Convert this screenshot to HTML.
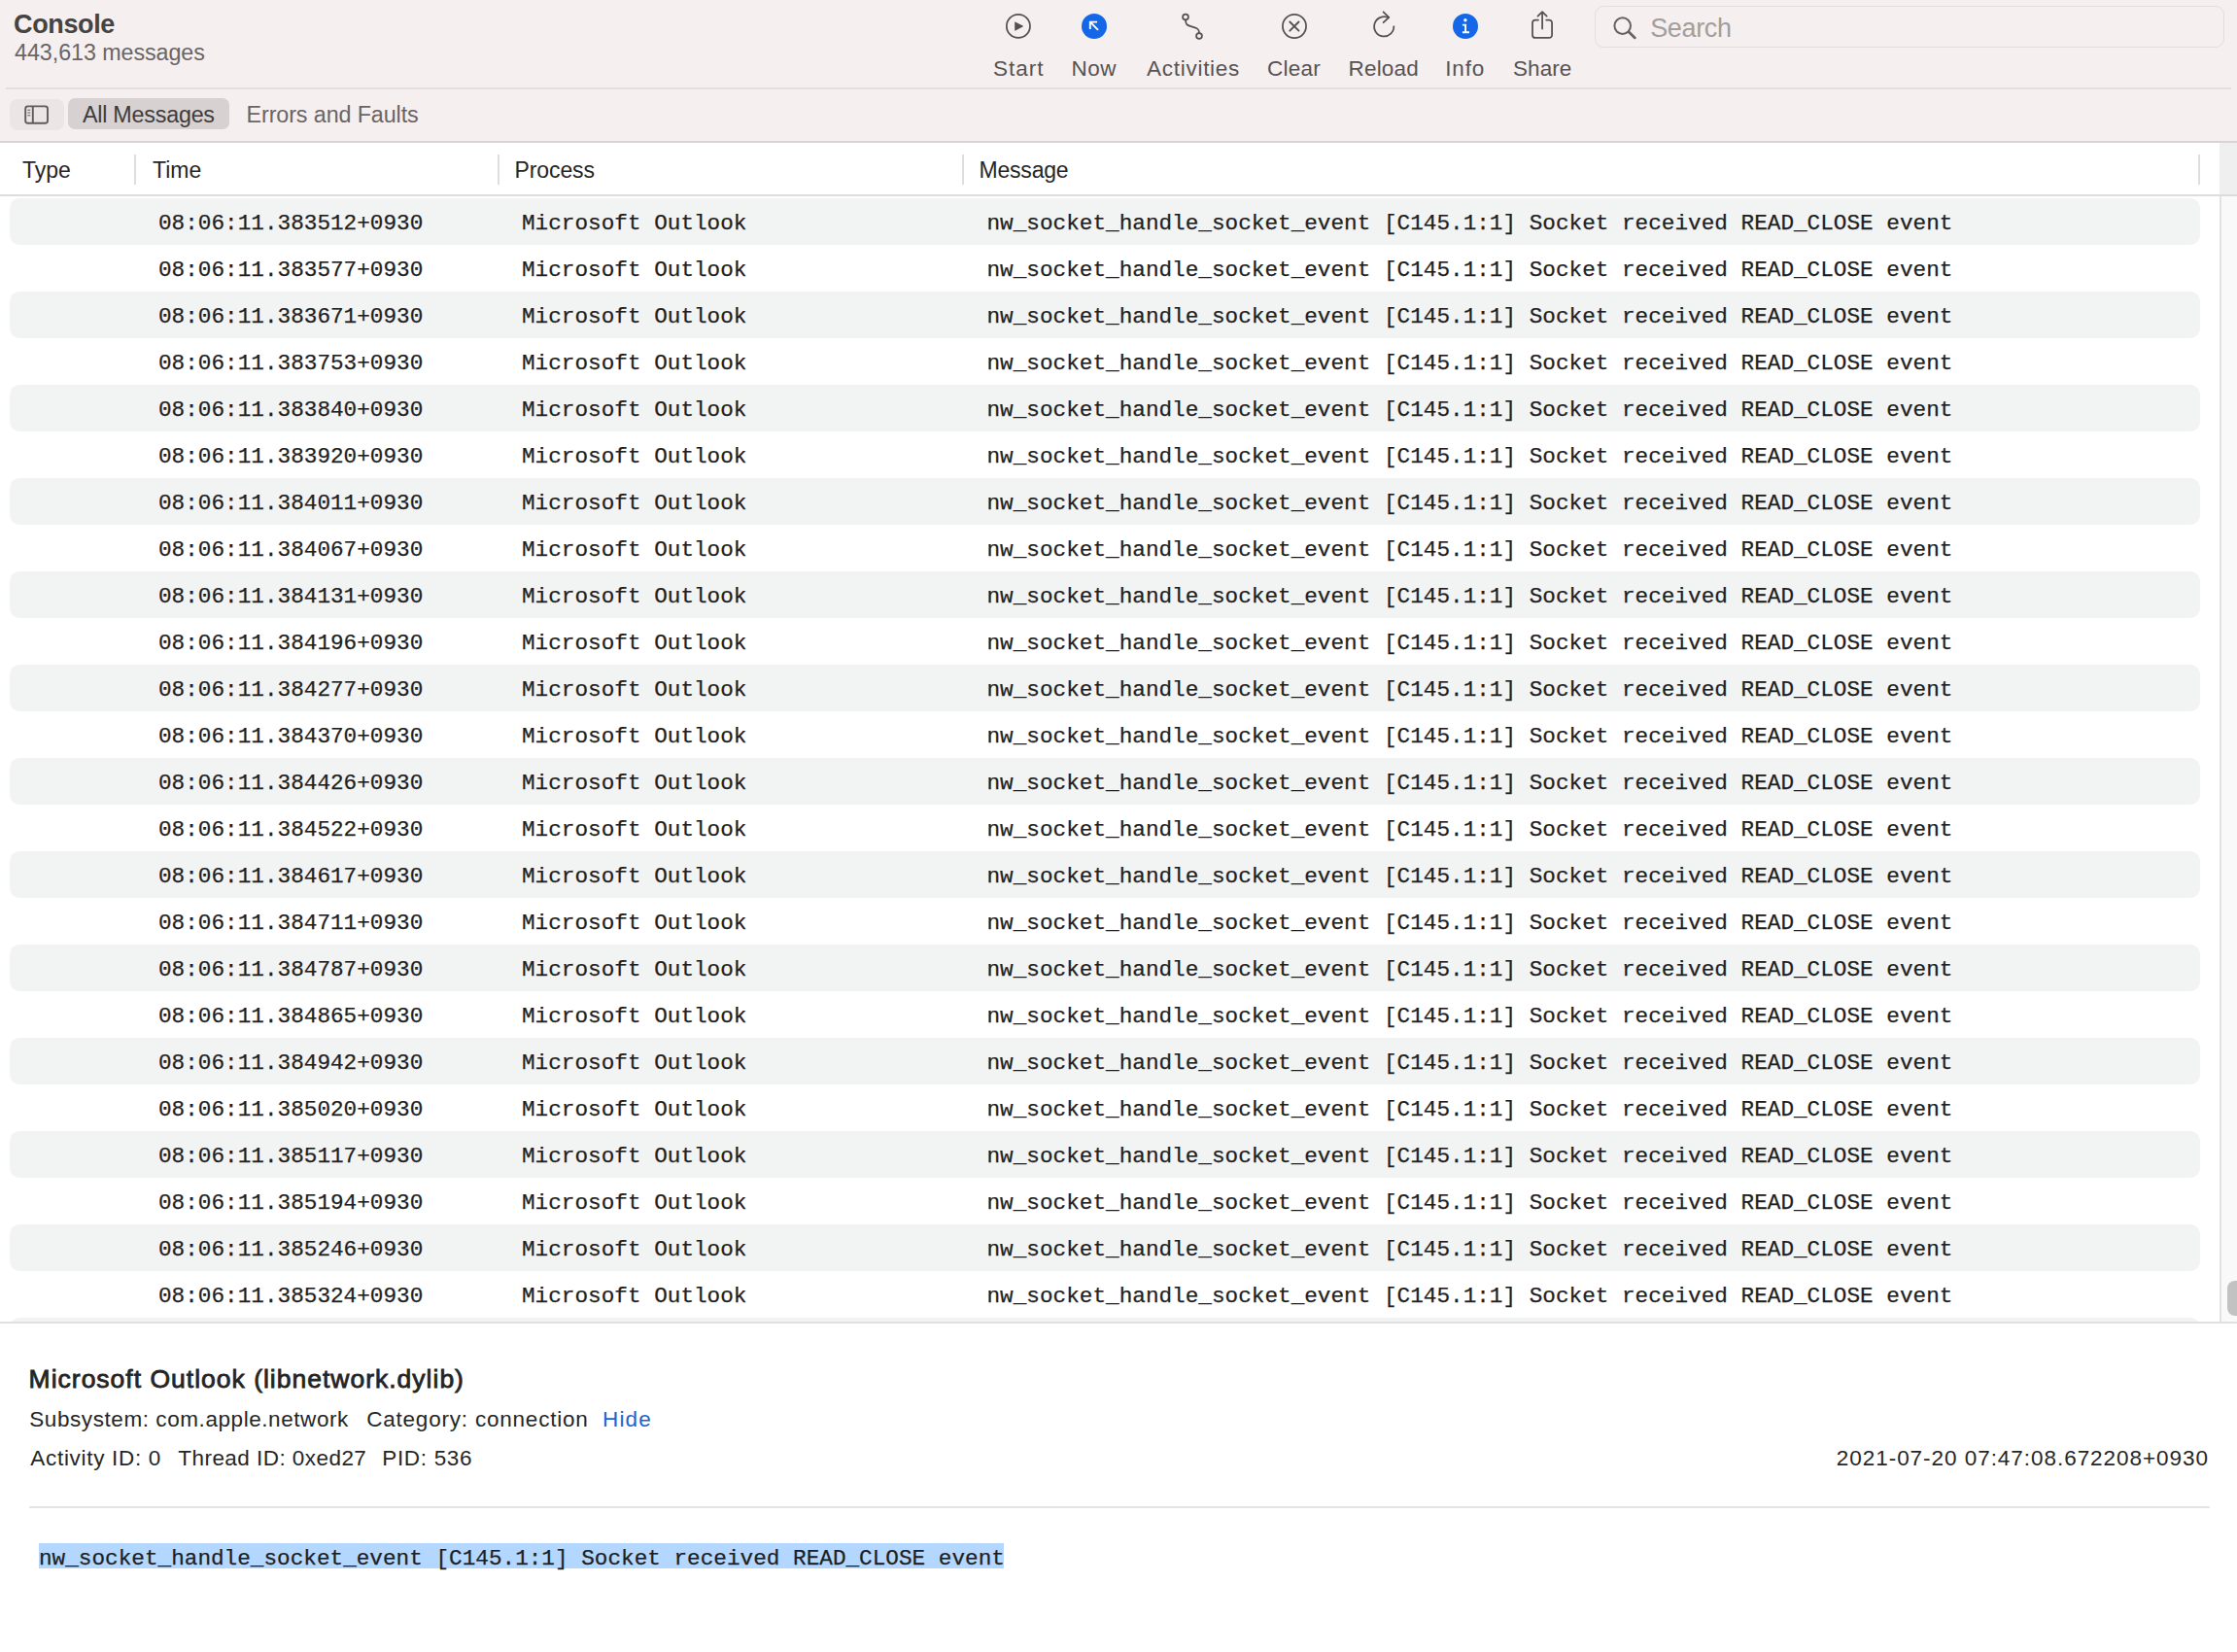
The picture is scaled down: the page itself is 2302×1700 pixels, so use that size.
<!DOCTYPE html><html><head><meta charset="utf-8"><style>
*{margin:0;padding:0;box-sizing:border-box}
html,body{width:2302px;height:1700px;overflow:hidden;background:#fff}
body{position:relative;font-family:"Liberation Sans",sans-serif}
.a{position:absolute}
.t{position:absolute;white-space:pre;line-height:40px;font-family:"Liberation Sans",sans-serif}
.mono{position:absolute;white-space:pre;font-family:"Liberation Mono",monospace;font-size:22.7px;color:#1f1f1f;line-height:26px;-webkit-text-stroke:0.25px #1f1f1f}
.div{position:absolute;top:159px;width:2px;height:31px;background:#dedede}
.row{position:absolute;left:10px;width:2254px;height:48px;border-radius:10px;background:#f2f3f3}
</style></head><body>
<div class="a" style="left:0;top:0;width:2302px;height:146px;background:#f5efef"></div>
<div class="a" style="left:6px;top:90px;width:2290px;height:2px;background:#e4dede"></div>
<div class="a" style="left:0;top:145px;width:2302px;height:2px;background:#d8d4d4"></div>
<div class="t" style="left:14.1px;top:5.1px;font-size:27.0px;letter-spacing:-0.37px;color:#464343;font-weight:700;">Console</div>
<div class="t" style="left:15.1px;top:33.8px;font-size:23.3px;letter-spacing:-0.07px;color:#6b6666;font-weight:400;">443,613 messages</div>
<div class="a" style="left:10px;top:102px;width:56px;height:32px;border-radius:8px;background:#ebe5e5"></div>
<div class="a" style="left:70px;top:101px;width:166px;height:32px;border-radius:7px;background:#d7d1d1"></div>
<div class="t" style="left:84.9px;top:97.9px;font-size:23.3px;letter-spacing:-0.22px;color:#403c3c;font-weight:400;">All Messages</div>
<div class="t" style="left:253.6px;top:97.9px;font-size:23.3px;letter-spacing:-0.1px;color:#6a6464;font-weight:400;">Errors and Faults</div>
<div class="t" style="left:1022.0px;top:50.8px;font-size:22.5px;letter-spacing:0.98px;color:#575353;font-weight:400;">Start</div>
<div class="t" style="left:1102.4px;top:50.8px;font-size:22.5px;letter-spacing:0.5px;color:#575353;font-weight:400;">Now</div>
<div class="t" style="left:1180.0px;top:50.8px;font-size:22.5px;letter-spacing:0.73px;color:#575353;font-weight:400;">Activities</div>
<div class="t" style="left:1304.0px;top:50.8px;font-size:22.5px;letter-spacing:0.25px;color:#575353;font-weight:400;">Clear</div>
<div class="t" style="left:1387.5px;top:50.8px;font-size:22.5px;letter-spacing:0.2px;color:#575353;font-weight:400;">Reload</div>
<div class="t" style="left:1487.3px;top:50.8px;font-size:22.5px;letter-spacing:0.8px;color:#575353;font-weight:400;">Info</div>
<div class="t" style="left:1557.0px;top:50.8px;font-size:22.5px;letter-spacing:0.07px;color:#575353;font-weight:400;">Share</div>
<div class="a" style="left:1641px;top:6px;width:648px;height:43px;border-radius:9px;border:1.5px solid #e3dddd"></div>
<div class="t" style="left:1698.2px;top:8.9px;font-size:27.0px;letter-spacing:-0.34px;color:#a39e9e;font-weight:400;">Search</div>
<svg class="a" style="left:0;top:0" width="2302" height="146" viewBox="0 0 2302 146">
<g fill="none" stroke="#555151" stroke-width="1.75">
<rect x="26.2" y="109.4" width="22.8" height="17.3" rx="2.5" stroke="#5f5b5b" stroke-width="1.9"/>
<line x1="33.8" y1="109.4" x2="33.8" y2="126.7" stroke="#5f5b5b" stroke-width="1.9"/>
<path d="M28.3 113.2h3M28.3 116h3M28.3 118.8h3" stroke="#5f5b5b" stroke-width="1"/>
<circle cx="1047.9" cy="26.9" r="12.05"/>
<circle cx="1332" cy="27" r="12.05"/>
<path d="M1327.3 22.5L1336.5 31.7M1336.5 22.5L1327.3 31.7" stroke-width="1.9" stroke-linecap="round"/>
<circle cx="1220" cy="17.4" r="2.9"/>
<circle cx="1234" cy="36.9" r="2.9"/>
<path d="M1220 20.3C1220 25.2 1221.5 25.9 1225.5 27.1L1229.5 28.3C1233.3 29.5 1234 30.8 1234 34"/>
<path d="M1429.3 18.6A10.1 10.1 0 1 0 1434.3 26.6"/>
<path d="M1423.6 12.3L1429.3 17.8L1423.6 23.2" stroke-linecap="round" stroke-linejoin="round"/>
<path d="M1583 20.5H1580A3 3 0 0 0 1577 23.5V35.9A3 3 0 0 0 1580 38.9H1594.1A3 3 0 0 0 1597.1 35.9V23.5A3 3 0 0 0 1594.1 20.5H1591.2" stroke-linecap="round"/>
<path d="M1587.1 29.5V12.3M1582.5 16.6L1587.1 12.2L1591.7 16.6" stroke-linecap="round" stroke-linejoin="round"/>
<circle cx="1669.7" cy="26.6" r="8.3" stroke="#666262" stroke-width="2"/>
<path d="M1676.3 33.1L1682.4 38.9" stroke="#666262" stroke-width="2.7" stroke-linecap="round"/>
</g>
<path d="M1044.6 22.4Q1044.2 22 1044.2 22.8V31.1Q1044.2 31.9 1044.9 31.5L1052.6 27.5Q1053.3 27 1052.6 26.6Z" fill="#555151"/>
<circle cx="1126" cy="27" r="13" fill="#1467e7"/>
<path d="M1121.8 30V22.6H1129M1122.4 23.2L1130 30.8" fill="none" stroke="#fff" stroke-width="1.9"/>
<circle cx="1508" cy="27" r="13" fill="#1467e7"/>
<circle cx="1507.9" cy="20.7" r="1.7" fill="#fff"/>
<path d="M1504.9 25.6H1508.1V33.2M1504.9 33.3H1512" fill="none" stroke="#fff" stroke-width="1.9"/>
</svg>
<div class="t" style="left:22.9px;top:155.0px;font-size:23.0px;letter-spacing:0.03px;color:#262626;font-weight:400;">Type</div>
<div class="t" style="left:157.0px;top:155.0px;font-size:23.0px;letter-spacing:0.0px;color:#262626;font-weight:400;">Time</div>
<div class="t" style="left:529.5px;top:155.0px;font-size:23px;letter-spacing:-0.1px;color:#262626">Process</div>
<div class="t" style="left:1007.5px;top:155.0px;font-size:23px;letter-spacing:-0.2px;color:#262626">Message</div>
<div class="div" style="left:138px"></div>
<div class="div" style="left:512px"></div>
<div class="div" style="left:990px"></div>
<div class="div" style="left:2262px"></div>
<div class="a" style="left:2284px;top:147px;width:18px;height:53px;background:#efefef"></div>
<div class="a" style="left:0;top:200px;width:2302px;height:2px;background:#dcdcdc"></div>
<div class="a" style="left:0;top:202px;width:2284px;height:1158px;overflow:hidden">
<div class="row" style="top:2px"></div>
<div class="mono" style="left:163px;top:14.5px">08:06:11.383512+0930</div>
<div class="mono" style="left:537px;top:14.5px">Microsoft Outlook</div>
<div class="mono" style="left:1015.5px;top:14.5px">nw_socket_handle_socket_event [C145.1:1] Socket received READ_CLOSE event</div>
<div class="mono" style="left:163px;top:62.5px">08:06:11.383577+0930</div>
<div class="mono" style="left:537px;top:62.5px">Microsoft Outlook</div>
<div class="mono" style="left:1015.5px;top:62.5px">nw_socket_handle_socket_event [C145.1:1] Socket received READ_CLOSE event</div>
<div class="row" style="top:98px"></div>
<div class="mono" style="left:163px;top:110.5px">08:06:11.383671+0930</div>
<div class="mono" style="left:537px;top:110.5px">Microsoft Outlook</div>
<div class="mono" style="left:1015.5px;top:110.5px">nw_socket_handle_socket_event [C145.1:1] Socket received READ_CLOSE event</div>
<div class="mono" style="left:163px;top:158.5px">08:06:11.383753+0930</div>
<div class="mono" style="left:537px;top:158.5px">Microsoft Outlook</div>
<div class="mono" style="left:1015.5px;top:158.5px">nw_socket_handle_socket_event [C145.1:1] Socket received READ_CLOSE event</div>
<div class="row" style="top:194px"></div>
<div class="mono" style="left:163px;top:206.5px">08:06:11.383840+0930</div>
<div class="mono" style="left:537px;top:206.5px">Microsoft Outlook</div>
<div class="mono" style="left:1015.5px;top:206.5px">nw_socket_handle_socket_event [C145.1:1] Socket received READ_CLOSE event</div>
<div class="mono" style="left:163px;top:254.5px">08:06:11.383920+0930</div>
<div class="mono" style="left:537px;top:254.5px">Microsoft Outlook</div>
<div class="mono" style="left:1015.5px;top:254.5px">nw_socket_handle_socket_event [C145.1:1] Socket received READ_CLOSE event</div>
<div class="row" style="top:290px"></div>
<div class="mono" style="left:163px;top:302.5px">08:06:11.384011+0930</div>
<div class="mono" style="left:537px;top:302.5px">Microsoft Outlook</div>
<div class="mono" style="left:1015.5px;top:302.5px">nw_socket_handle_socket_event [C145.1:1] Socket received READ_CLOSE event</div>
<div class="mono" style="left:163px;top:350.5px">08:06:11.384067+0930</div>
<div class="mono" style="left:537px;top:350.5px">Microsoft Outlook</div>
<div class="mono" style="left:1015.5px;top:350.5px">nw_socket_handle_socket_event [C145.1:1] Socket received READ_CLOSE event</div>
<div class="row" style="top:386px"></div>
<div class="mono" style="left:163px;top:398.5px">08:06:11.384131+0930</div>
<div class="mono" style="left:537px;top:398.5px">Microsoft Outlook</div>
<div class="mono" style="left:1015.5px;top:398.5px">nw_socket_handle_socket_event [C145.1:1] Socket received READ_CLOSE event</div>
<div class="mono" style="left:163px;top:446.5px">08:06:11.384196+0930</div>
<div class="mono" style="left:537px;top:446.5px">Microsoft Outlook</div>
<div class="mono" style="left:1015.5px;top:446.5px">nw_socket_handle_socket_event [C145.1:1] Socket received READ_CLOSE event</div>
<div class="row" style="top:482px"></div>
<div class="mono" style="left:163px;top:494.5px">08:06:11.384277+0930</div>
<div class="mono" style="left:537px;top:494.5px">Microsoft Outlook</div>
<div class="mono" style="left:1015.5px;top:494.5px">nw_socket_handle_socket_event [C145.1:1] Socket received READ_CLOSE event</div>
<div class="mono" style="left:163px;top:542.5px">08:06:11.384370+0930</div>
<div class="mono" style="left:537px;top:542.5px">Microsoft Outlook</div>
<div class="mono" style="left:1015.5px;top:542.5px">nw_socket_handle_socket_event [C145.1:1] Socket received READ_CLOSE event</div>
<div class="row" style="top:578px"></div>
<div class="mono" style="left:163px;top:590.5px">08:06:11.384426+0930</div>
<div class="mono" style="left:537px;top:590.5px">Microsoft Outlook</div>
<div class="mono" style="left:1015.5px;top:590.5px">nw_socket_handle_socket_event [C145.1:1] Socket received READ_CLOSE event</div>
<div class="mono" style="left:163px;top:638.5px">08:06:11.384522+0930</div>
<div class="mono" style="left:537px;top:638.5px">Microsoft Outlook</div>
<div class="mono" style="left:1015.5px;top:638.5px">nw_socket_handle_socket_event [C145.1:1] Socket received READ_CLOSE event</div>
<div class="row" style="top:674px"></div>
<div class="mono" style="left:163px;top:686.5px">08:06:11.384617+0930</div>
<div class="mono" style="left:537px;top:686.5px">Microsoft Outlook</div>
<div class="mono" style="left:1015.5px;top:686.5px">nw_socket_handle_socket_event [C145.1:1] Socket received READ_CLOSE event</div>
<div class="mono" style="left:163px;top:734.5px">08:06:11.384711+0930</div>
<div class="mono" style="left:537px;top:734.5px">Microsoft Outlook</div>
<div class="mono" style="left:1015.5px;top:734.5px">nw_socket_handle_socket_event [C145.1:1] Socket received READ_CLOSE event</div>
<div class="row" style="top:770px"></div>
<div class="mono" style="left:163px;top:782.5px">08:06:11.384787+0930</div>
<div class="mono" style="left:537px;top:782.5px">Microsoft Outlook</div>
<div class="mono" style="left:1015.5px;top:782.5px">nw_socket_handle_socket_event [C145.1:1] Socket received READ_CLOSE event</div>
<div class="mono" style="left:163px;top:830.5px">08:06:11.384865+0930</div>
<div class="mono" style="left:537px;top:830.5px">Microsoft Outlook</div>
<div class="mono" style="left:1015.5px;top:830.5px">nw_socket_handle_socket_event [C145.1:1] Socket received READ_CLOSE event</div>
<div class="row" style="top:866px"></div>
<div class="mono" style="left:163px;top:878.5px">08:06:11.384942+0930</div>
<div class="mono" style="left:537px;top:878.5px">Microsoft Outlook</div>
<div class="mono" style="left:1015.5px;top:878.5px">nw_socket_handle_socket_event [C145.1:1] Socket received READ_CLOSE event</div>
<div class="mono" style="left:163px;top:926.5px">08:06:11.385020+0930</div>
<div class="mono" style="left:537px;top:926.5px">Microsoft Outlook</div>
<div class="mono" style="left:1015.5px;top:926.5px">nw_socket_handle_socket_event [C145.1:1] Socket received READ_CLOSE event</div>
<div class="row" style="top:962px"></div>
<div class="mono" style="left:163px;top:974.5px">08:06:11.385117+0930</div>
<div class="mono" style="left:537px;top:974.5px">Microsoft Outlook</div>
<div class="mono" style="left:1015.5px;top:974.5px">nw_socket_handle_socket_event [C145.1:1] Socket received READ_CLOSE event</div>
<div class="mono" style="left:163px;top:1022.5px">08:06:11.385194+0930</div>
<div class="mono" style="left:537px;top:1022.5px">Microsoft Outlook</div>
<div class="mono" style="left:1015.5px;top:1022.5px">nw_socket_handle_socket_event [C145.1:1] Socket received READ_CLOSE event</div>
<div class="row" style="top:1058px"></div>
<div class="mono" style="left:163px;top:1070.5px">08:06:11.385246+0930</div>
<div class="mono" style="left:537px;top:1070.5px">Microsoft Outlook</div>
<div class="mono" style="left:1015.5px;top:1070.5px">nw_socket_handle_socket_event [C145.1:1] Socket received READ_CLOSE event</div>
<div class="mono" style="left:163px;top:1118.5px">08:06:11.385324+0930</div>
<div class="mono" style="left:537px;top:1118.5px">Microsoft Outlook</div>
<div class="mono" style="left:1015.5px;top:1118.5px">nw_socket_handle_socket_event [C145.1:1] Socket received READ_CLOSE event</div>
<div class="row" style="top:1154px"></div>
<div class="mono" style="left:163px;top:1166.5px">08:06:11.385400+0930</div>
<div class="mono" style="left:537px;top:1166.5px">Microsoft Outlook</div>
<div class="mono" style="left:1015.5px;top:1166.5px">nw_socket_handle_socket_event [C145.1:1] Socket received READ_CLOSE event</div>
</div>
<div class="a" style="left:2284px;top:202px;width:2px;height:1158px;background:#e2e2e2"></div>
<div class="a" style="left:2286px;top:202px;width:16px;height:1158px;background:#f9f9f9"></div>
<div class="a" style="left:2292px;top:1318px;width:20px;height:36px;border-radius:8px;background:#c2c2c2"></div>
<div class="a" style="left:0;top:1360px;width:2302px;height:2px;background:#e0e0e0"></div>
<div class="t" style="left:29.6px;top:1398.7px;font-size:26.5px;letter-spacing:1.0px;color:#242424;-webkit-text-stroke:0.8px #242424">Microsoft Outlook (libnetwork.dylib)</div>
<div class="t" style="left:30.3px;top:1440.6px;font-size:22.5px;letter-spacing:0.57px;color:#262626;font-weight:400;">Subsystem: com.apple.network</div>
<div class="t" style="left:377.2px;top:1440.6px;font-size:22.5px;letter-spacing:0.79px;color:#262626;font-weight:400;">Category: connection</div>
<div class="t" style="left:620.0px;top:1440.6px;font-size:22.5px;letter-spacing:1.17px;color:#1d63d1;font-weight:400;">Hide</div>
<div class="t" style="left:31.3px;top:1480.7px;font-size:22.5px;letter-spacing:0.69px;color:#262626;font-weight:400;">Activity ID: 0</div>
<div class="t" style="left:183.3px;top:1480.7px;font-size:22.5px;letter-spacing:0.45px;color:#262626;font-weight:400;">Thread ID: 0xed27</div>
<div class="t" style="left:393.2px;top:1480.7px;font-size:22.5px;letter-spacing:0.69px;color:#262626;font-weight:400;">PID: 536</div>
<div class="t" style="left:1889.8px;top:1480.7px;font-size:22.5px;letter-spacing:0.96px;color:#262626;font-weight:400;">2021-07-20 07:47:08.672208+0930</div>
<div class="a" style="left:30px;top:1550px;width:2244px;height:2px;background:#e4e4e4"></div>
<div class="a" style="left:40px;top:1588px;width:993px;height:26px;background:#b3d7ff"></div>
<div class="mono" style="left:40px;top:1590.5px">nw_socket_handle_socket_event [C145.1:1] Socket received READ_CLOSE event</div>
</body></html>
